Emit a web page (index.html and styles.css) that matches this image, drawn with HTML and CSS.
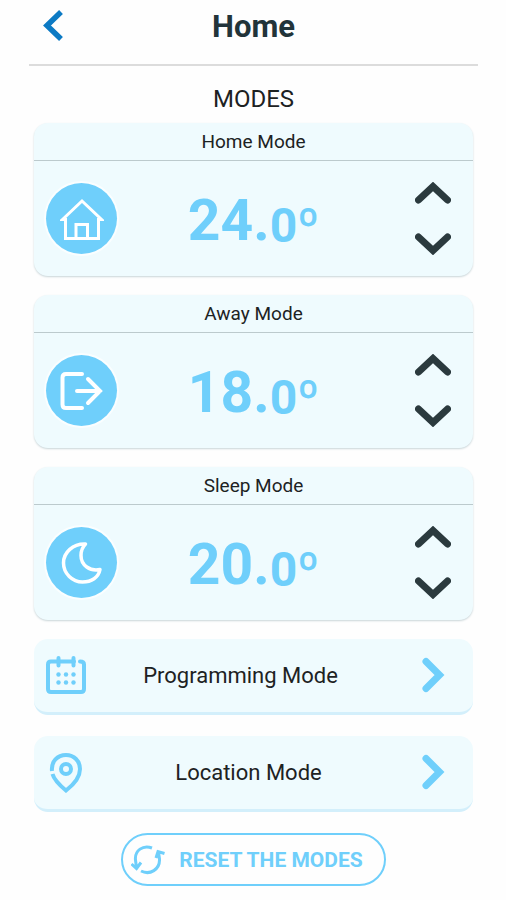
FILE: index.html
```html
<!DOCTYPE html>
<html lang="en">

<head>
  <meta charset="UTF-8">
  <meta name="viewport" content="width=device-width, initial-scale=1.0">
  <title>Home</title>
  <link rel="stylesheet" href="styles.css">
</head>

<body>
  <header class="top-bar">
    <a href="#" class="back" aria-label="Back">
      <svg width="20" height="34" viewBox="0 0 20 34"><path d="M18 2 4 15.500 18 29" fill="none" stroke="#0c7ac4" stroke-width="5.500"/></svg>
    </a>
    <h1>Home</h1>
  </header>

  <main>
    <h2 class="section-title">MODES</h2>

    <!-- Temperature modes -->
    <section class="card">
      <h3>Home Mode</h3>
      <div class="card-body">
        <div class="icon">
          <svg width="44" height="44" viewBox="0 0 44 44"><path d="M2.500 22.500 22 4 41.500 22.500H38.500V41.500H5.500V22.500ZM16 41.500V27.500H27.500V41.500" fill="none" stroke="#fff" stroke-width="3"/></svg>
        </div>
        <p class="temp">24.<span class="decimal">0º</span></p>
        <div class="arrows">
          <button type="button" aria-label="Raise home temperature"><svg width="36" height="22" viewBox="0 0 36 22"><path d="M3.500 18 18 4.500 32.500 18"/></svg></button>
          <button type="button" aria-label="Lower home temperature"><svg width="36" height="22" viewBox="0 0 36 22"><path d="M3.500 4 18 17.500 32.500 4"/></svg></button>
        </div>
      </div>
    </section>

    <section class="card">
      <h3>Away Mode</h3>
      <div class="card-body">
        <div class="icon">
          <svg width="44" height="44" viewBox="0 0 44 44"><path d="M22 5H6Q2.500 5 2.500 8.500V35.500Q2.500 39 6 39H22M17 22H40M28 10 40 22 28 34" fill="none" stroke="#fff" stroke-width="4" stroke-linecap="round"/></svg>
        </div>
        <p class="temp">18.<span class="decimal">0º</span></p>
        <div class="arrows">
          <button type="button" aria-label="Raise away temperature"><svg width="36" height="22" viewBox="0 0 36 22"><path d="M3.500 18 18 4.500 32.500 18"/></svg></button>
          <button type="button" aria-label="Lower away temperature"><svg width="36" height="22" viewBox="0 0 36 22"><path d="M3.500 4 18 17.500 32.500 4"/></svg></button>
        </div>
      </div>
    </section>

    <section class="card">
      <h3>Sleep Mode</h3>
      <div class="card-body">
        <div class="icon">
          <svg width="44" height="44" viewBox="0 0 44 44"><path d="M25.500 3C13 2.500 3.500 11.500 3.500 22C3.500 32.500 12.500 41 22.500 41C31.500 41 38.500 36.500 40 28.500C30 30.500 21 24.500 21 14.500C21 10 22.500 6 25.500 3Z" fill="none" stroke="#fff" stroke-width="3.500" stroke-linejoin="round"/></svg>
        </div>
        <p class="temp">20.<span class="decimal">0º</span></p>
        <div class="arrows">
          <button type="button" aria-label="Raise sleep temperature"><svg width="36" height="22" viewBox="0 0 36 22"><path d="M3.500 18 18 4.500 32.500 18"/></svg></button>
          <button type="button" aria-label="Lower sleep temperature"><svg width="36" height="22" viewBox="0 0 36 22"><path d="M3.500 4 18 17.500 32.500 4"/></svg></button>
        </div>
      </div>
    </section>

    <!-- Links -->
    <a href="#" class="link-row programming">
      <svg width="40" height="40" viewBox="0 0 40 40">
        <g fill="none" stroke="#6fcffb" stroke-width="4" stroke-linecap="round">
          <path d="M28 5.500H5Q2 5.500 2 8.500V33Q2 36 5 36H35Q38 36 38 33V8.500Q38 5.500 34 5.500"/>
          <path d="M12.500 2V9.500M27.500 2V9.500"/>
        </g>
        <g fill="#6fcffb">
          <circle cx="12.500" cy="18.500" r="2.200"/><circle cx="20" cy="18.500" r="2.200"/><circle cx="27.500" cy="18.500" r="2.200"/>
          <circle cx="12.500" cy="26.500" r="2.200"/><circle cx="20" cy="26.500" r="2.200"/><circle cx="27.500" cy="26.500" r="2.200"/>
        </g>
      </svg>
      <span>Programming Mode</span>
      <svg class="chevron" width="24" height="38" viewBox="0 0 24 38"><path d="M5 4.500 18.500 18 5 31.500" fill="none" stroke="#6fcffb" stroke-width="7" stroke-linecap="round"/></svg>
    </a>

    <a href="#" class="link-row location">
      <svg width="40" height="40" viewBox="0 0 40 40">
        <g fill="none" stroke="#6fcffb" stroke-width="4">
          <path d="M6 18C5 8.500 11.500 2 20 2C28 2 34 8 34 16C34 25.500 26.500 32.500 20 37.500C14 32.500 8 26.500 6.500 21"/>
          <circle cx="20" cy="16" r="5"/>
        </g>
      </svg>
      <span>Location Mode</span>
      <svg class="chevron" width="24" height="38" viewBox="0 0 24 38"><path d="M5 4.500 18.500 18 5 31.500" fill="none" stroke="#6fcffb" stroke-width="7" stroke-linecap="round"/></svg>
    </a>

    <button type="button" class="reset">
      <svg width="34" height="30" viewBox="0 0 34 30" fill="none" stroke="#6fcffb" stroke-width="3">
        <path d="M21 3C12 -0.500 3.500 5.500 4.500 15L5.500 23M0.500 19 5.500 23.500 10 17.500"/>
        <path d="M10 26C19 30.500 29 24.500 28.500 14L27.500 7M25 13 27 6.500 33.500 8.500"/>
      </svg>
      RESET THE MODES
    </button>
  </main>
</body>

</html>
```
FILE: styles.css
```css
* {
  box-sizing: border-box;
}

body {
  margin: 0 28px 0 29px;
  background: #fefefe;
  color: #1d2223;
  font-family: Roboto, sans-serif;
}

h1, h2, h3, p {
  margin: 0;
}

button {
  padding: 0;
  border: none;
  background: none;
  font-family: inherit;
  cursor: pointer;
}

svg {
  display: block;
}

.top-bar {
  display: grid;
  grid-template-columns: 48px 1fr 48px;
  align-items: center;
  height: 66px;
  padding-bottom: 10px;
  border-bottom: 2px solid #dcdcdc;
}

.top-bar h1 {
  color: #22343a;
  font-size: 31px;
  line-height: 40px;
  font-weight: 700;
  text-align: center;
}

.back {
  padding-left: 14px;
}

main {
  padding: 0 5px;
}

.section-title {
  padding: 17px 0 8px;
  font-size: 24px;
  line-height: 32px;
  font-weight: 400;
  text-align: center;
}

.card {
  margin-bottom: 19px;
  border-radius: 14px;
  background: #effbfe;
  box-shadow: 0 1px 2px #c9d5d8;
}

.card h3 {
  border-bottom: 1px solid #bccacd;
  font-size: 19px;
  line-height: 37px;
  font-weight: 400;
  text-align: center;
}

.card-body {
  display: grid;
  grid-template-columns: 84px 1fr 84px;
  align-items: center;
  height: 115px;
}

.icon {
  display: grid;
  place-items: center;
  width: 71px;
  height: 71px;
  margin-left: 12px;
  border-radius: 50%;
  background: #6fcffb;
  box-shadow: 0 0 0 2px #fafeff;
}

.temp {
  padding-top: 10px;
  color: #6fcffb;
  font-size: 57px;
  line-height: 64px;
  font-weight: 700;
  text-align: center;
}

.decimal {
  font-size: 48px;
  vertical-align: -2px;
}

.arrows {
  display: grid;
  justify-items: center;
  gap: 29px;
  padding-left: 4px;
}

.arrows path {
  fill: none;
  stroke: #2b3a3e;
  stroke-width: 7;
  stroke-linecap: round;
}

.link-row {
  display: grid;
  align-items: center;
  height: 76px;
  margin-bottom: 21px;
  padding: 0 28px 0 12px;
  border-bottom: 3px solid #d3effb;
  border-radius: 14px;
  background: #effbfe;
  color: #1d2223;
  font-size: 22px;
  text-align: center;
  text-decoration: none;
}

.programming {
  grid-template-columns: 40px 1fr 50px;
}

.location {
  grid-template-columns: 40px 1fr 34px;
}

.chevron {
  justify-self: end;
}

.reset {
  display: flex;
  align-items: center;
  gap: 14px;
  height: 53px;
  margin: 0 auto;
  padding: 0 21px 0 8px;
  border: 2px solid #6fcffb;
  border-radius: 27px;
  color: #6fcffb;
  font-size: 21px;
  font-weight: 700;
}
```
